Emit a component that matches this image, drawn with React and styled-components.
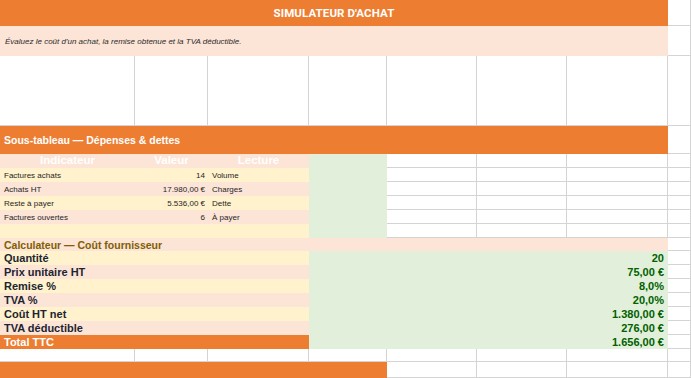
import React from "react";
import styled, { createGlobalStyle } from "styled-components";

const ORANGE = "#ed7d31";
const PINK = "#fce4d6";
const CREAM = "#fff2cc";
const GREEN = "#e2efda";
const GRID = "#d4d4d4";

const GlobalStyle = createGlobalStyle`
  html, body {
    margin: 0;
    padding: 0;
    background: #ffffff;
  }
  body {
    font-family: "Liberation Sans", Arial, sans-serif;
  }
`;

// the sheet itself: fixed column widths like a spreadsheet
const Sheet = styled.div`
  display: grid;
  grid-template-columns: 135px 73px 101px 78px 90px 90px 101px 23px;
  grid-template-rows: 26px 30px 70px 28px repeat(6, 14px) 13px repeat(7, 14px) 13px 16px;
  width: 691px;
  height: 378px;
  overflow: hidden;
`;

const Blank = styled.div`
  grid-column: span ${(p) => p.$span || 1};
  border-right: 1px solid ${GRID};
  border-bottom: 1px solid ${GRID};
  box-sizing: border-box;
  background: #ffffff;
`;

const TitleBar = styled.div`
  grid-column: span 7;
  background: ${ORANGE};
  color: #ffffff;
  font-family: Roboto, "Liberation Sans", sans-serif;
  font-weight: 700;
  font-size: 11.5px;
  display: flex;
  align-items: center;
  justify-content: center;
  letter-spacing: 0.1px;
`;

const Subtitle = styled.div`
  grid-column: span 7;
  background: ${PINK};
  color: #2b2b2b;
  font-style: italic;
  font-size: 8px;
  display: flex;
  align-items: center;
  padding-left: 5px;
`;

const SectionBar = styled.div`
  grid-column: span 7;
  background: ${ORANGE};
  color: #ffffff;
  font-weight: 700;
  font-size: 10.5px;
  display: flex;
  align-items: center;
  padding-left: 4px;
`;

const ColHead = styled.div`
  background: ${PINK};
  color: #ffffff;
  font-weight: 700;
  font-size: 11.5px;
  display: flex;
  align-items: center;
  justify-content: center;
  line-height: 1;
`;

const SubCell = styled.div`
  background: ${(p) => (p.$alt ? PINK : CREAM)};
  color: #262626;
  font-size: 8px;
  display: flex;
  align-items: center;
  justify-content: ${(p) => (p.$right ? "flex-end" : "flex-start")};
  padding: ${(p) => (p.$right ? "0 3px 0 0" : "0 0 0 4px")};
  white-space: nowrap;
`;

const GreenColumn = styled.div`
  grid-row: span 6;
  background: ${GREEN};
`;

const CalcHeader = styled.div`
  grid-column: span 7;
  background: ${PINK};
  color: #7f6000;
  font-weight: 700;
  font-size: 10.5px;
  display: flex;
  align-items: center;
  padding-left: 4px;
`;

const CalcLabel = styled.div`
  grid-column: span 3;
  background: ${(p) => (p.$total ? ORANGE : p.$alt ? PINK : CREAM)};
  color: ${(p) => (p.$total ? "#ffffff" : "#1c2530")};
  font-weight: 700;
  font-size: 11px;
  display: flex;
  align-items: center;
  padding-left: 4px;
`;

const CalcValue = styled.div`
  grid-column: span 4;
  background: ${GREEN};
  color: #006100;
  font-weight: 700;
  font-size: 11px;
  display: flex;
  align-items: center;
  justify-content: flex-end;
  padding-right: 4px;
`;

const BottomBar = styled.div`
  grid-column: span 4;
  background: ${ORANGE};
`;

const subRows = [
  { label: "Factures achats", value: "14", note: "Volume" },
  { label: "Achats HT", value: "17.980,00 €", note: "Charges" },
  { label: "Reste à payer", value: "5.536,00 €", note: "Dette" },
  { label: "Factures ouvertes", value: "6", note: "À payer" },
  { label: "", value: "", note: "" }
];

const calcRows = [
  { label: "Quantité", value: "20" },
  { label: "Prix unitaire HT", value: "75,00 €" },
  { label: "Remise %", value: "8,0%" },
  { label: "TVA %", value: "20,0%" },
  { label: "Coût HT net", value: "1.380,00 €" },
  { label: "TVA déductible", value: "276,00 €" },
  { label: "Total TTC", value: "1.656,00 €", total: true }
];

const blanks = (n, prefix) =>
  Array.from({ length: n }, (_, i) => <Blank key={prefix + i} />);

export default function App() {
  return (
    <>
      <GlobalStyle />
      <Sheet>
        <TitleBar>SIMULATEUR D'ACHAT</TitleBar>
        <Blank />

        <Subtitle>Évaluez le coût d'un achat, la remise obtenue et la TVA déductible.</Subtitle>
        <Blank />

        {blanks(8, "r3-")}

        <SectionBar>Sous-tableau — Dépenses &amp; dettes</SectionBar>
        <Blank />

        <ColHead>Indicateur</ColHead>
        <ColHead>Valeur</ColHead>
        <ColHead>Lecture</ColHead>
        <GreenColumn />
        {blanks(4, "h-")}

        {subRows.map((row, i) => (
          <React.Fragment key={"s" + i}>
            <SubCell $alt={i % 2 === 1}>{row.label}</SubCell>
            <SubCell $alt={i % 2 === 1} $right>{row.value}</SubCell>
            <SubCell $alt={i % 2 === 1}>{row.note}</SubCell>
            {blanks(4, "s" + i + "-")}
          </React.Fragment>
        ))}

        <CalcHeader>Calculateur — Coût fournisseur</CalcHeader>
        <Blank />

        {calcRows.map((row, i) => (
          <React.Fragment key={"c" + i}>
            <CalcLabel $alt={i % 2 === 1} $total={row.total}>{row.label}</CalcLabel>
            <CalcValue>{row.value}</CalcValue>
            <Blank />
          </React.Fragment>
        ))}

        {blanks(8, "e-")}

        <BottomBar />
        {blanks(4, "b-")}
      </Sheet>
    </>
  );
}
